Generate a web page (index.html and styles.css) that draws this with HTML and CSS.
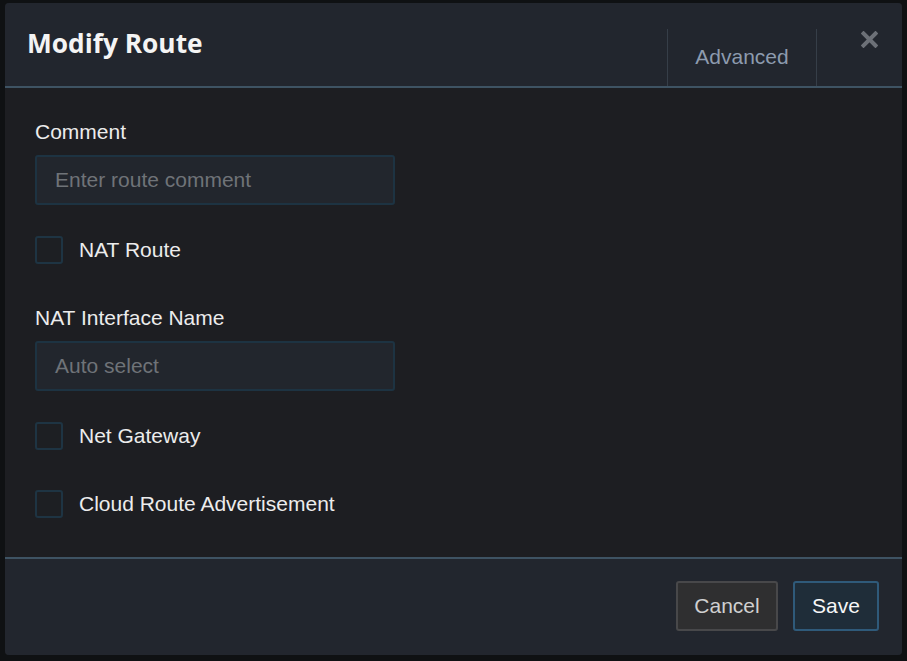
FILE: index.html
```html
<!DOCTYPE html>
<html>
<head>
<meta charset="utf-8">
<title>Modify Route</title>
<link rel="stylesheet" href="styles.css">
</head>
<body>
<div class="page">
  <div class="modal">
    <div class="modal-header">
      <h1 class="title">Modify Route</h1>
      <div class="tab">Advanced</div>
      <div class="close-wrap">
        <svg class="close" width="17" height="17" viewBox="0 0 17 17"><path d="M2.5 2.5 L14.5 14.5 M14.5 2.5 L2.5 14.5" stroke="#6c7077" stroke-width="4" stroke-linecap="square"/></svg>
      </div>
    </div>
    <div class="modal-body">
      <div class="field">
        <label class="label">Comment</label>
        <div class="input">Enter route comment</div>
      </div>
      <div class="check first"><span class="box"></span><span class="check-label">NAT Route</span></div>
      <div class="field second">
        <label class="label">NAT Interface Name</label>
        <div class="input">Auto select</div>
      </div>
      <div class="check first"><span class="box"></span><span class="check-label">Net Gateway</span></div>
      <div class="check last"><span class="box"></span><span class="check-label">Cloud Route Advertisement</span></div>
    </div>
    <div class="modal-footer">
      <button class="btn cancel">Cancel</button>
      <button class="btn save">Save</button>
    </div>
  </div>
</div>
</body>
</html>
```
FILE: styles.css
```css
* { box-sizing: border-box; }
html, body {
  margin: 0;
  padding: 0;
  background: #0f1113;
  height: 661px;
  overflow: hidden;
}
.page {
  padding-top: 3px;
  font-family: "Liberation Sans", Arial, sans-serif;
}
.modal {
  width: 897px;
  margin: 0 auto;
  border-radius: 4px;
  overflow: hidden;
  background: #1d1e22;
}
.modal-header {
  display: flex;
  align-items: flex-end;
  height: 85px;
  background: #22262e;
  border-bottom: 2px solid #3e5363;
}
.title {
  flex: 1;
  margin: 0;
  align-self: flex-start;
  padding: 24px 0 0 22px;
  font-family: "Open Sans", "DejaVu Sans", sans-serif;
  font-weight: 700;
  font-size: 26.3px;
  line-height: 32px;
  color: #f4f4f4;
}
.tab {
  width: 150px;
  height: 57px;
  border-left: 1px solid #363e48;
  border-right: 1px solid #363e48;
  display: flex;
  align-items: center;
  justify-content: center;
  font-size: 21px;
  color: #8d9bae;
  padding-bottom: 2px;
}
.close-wrap {
  width: 85px;
  align-self: flex-start;
  display: flex;
  justify-content: flex-end;
  padding: 28px 24px 0 0;
}
.close { display: block; }
.modal-body {
  padding: 32px 30px 39px 30px;
}
.label {
  display: block;
  font-size: 21px;
  line-height: 24px;
  color: #ececec;
  margin-bottom: 11px;
}
.input {
  width: 360px;
  height: 50px;
  background: #22262d;
  border: 2px solid #1d3342;
  border-radius: 3px;
  padding: 0 18px;
  display: flex;
  align-items: center;
  font-size: 21px;
  color: #6f7378;
}
.field.second { margin-top: 42px; }
.check {
  display: flex;
  align-items: center;
  gap: 16px;
  height: 28px;
}
.check.first { margin-top: 31px; }
.check.last { margin-top: 40px; }
.box {
  width: 28px;
  height: 28px;
  border: 2px solid #1e3443;
  border-radius: 3px;
  background: #1d1f23;
}
.check-label {
  font-size: 21px;
  color: #ececec;
}
.modal-footer {
  border-top: 2px solid #3e5363;
  background: #22262e;
  height: 98px;
  display: flex;
  justify-content: flex-end;
  align-items: flex-start;
  gap: 15px;
  padding: 22px 23px 0 0;
}
.btn {
  height: 50px;
  border-radius: 3px;
  font-family: "Liberation Sans", Arial, sans-serif;
  font-size: 21px;
  padding: 0;
}
.cancel {
  width: 102px;
  background: #2f2f30;
  border: 2px solid #48484a;
  color: #d0d0d0;
}
.save {
  width: 86px;
  background: #1f2d39;
  border: 2px solid #2f5a7a;
  color: #f6f6f6;
}
```
